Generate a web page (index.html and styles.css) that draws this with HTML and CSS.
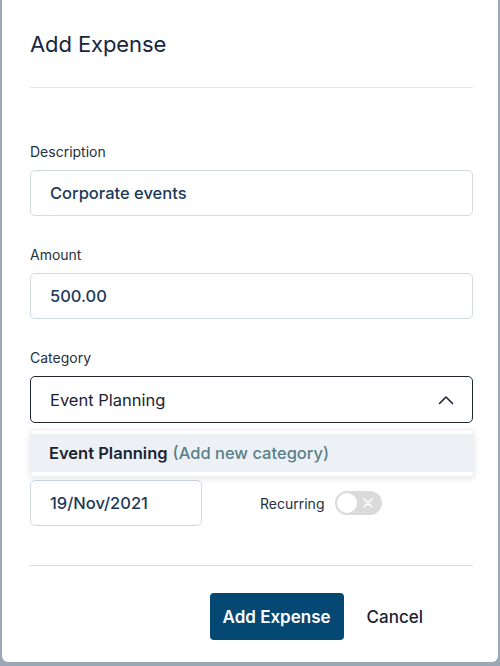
FILE: index.html
```html
<!DOCTYPE html>
<html lang="en">
<head>
    <meta charset="UTF-8">
    <meta name="viewport" content="width=device-width, initial-scale=1.0">
    <title>Add Expense</title>
    <link rel="stylesheet" href="styles.css">
</head>
<body>

    <div class="modal">
        <!-- Header -->
        <div class="modal-header">
            <h1>Add Expense</h1>
        </div>

        <!-- Form -->
        <div class="modal-body">
            <div class="field">
                <label class="label">Description</label>
                <div class="input">Corporate events</div>
            </div>

            <div class="field">
                <label class="label">Amount</label>
                <div class="input">500.00</div>
            </div>

            <div class="field category">
                <label class="label">Category</label>
                <div class="select">
                    <span>Event Planning</span>
                    <svg class="chevron" width="16" height="10" viewBox="0 0 16 10">
                        <path d="M1.5 8.5 L8 2 L14.5 8.5" fill="none" stroke="#1c2535" stroke-width="1.6" stroke-linecap="round" stroke-linejoin="round"/>
                    </svg>
                </div>
                <div class="dropdown">
                    <div class="option"><b>Event Planning</b> <span class="hint">(Add new category)</span></div>
                </div>
            </div>

            <div class="field">
                <label class="label hidden">Date</label>
                <div class="date-row">
                    <div class="input date">19/Nov/2021</div>
                    <span class="toggle-label">Recurring</span>
                    <div class="toggle">
                        <span class="knob"></span>
                        <svg class="cross" width="10" height="10" viewBox="0 0 10 10">
                            <path d="M1 1 L9 9 M9 1 L1 9" stroke="#fff" stroke-width="1.6" stroke-linecap="round"/>
                        </svg>
                    </div>
                </div>
            </div>
        </div>

        <!-- Footer -->
        <div class="modal-footer">
            <button class="button primary">Add Expense</button>
            <button class="button link">Cancel</button>
        </div>
    </div>

</body>
</html>
```

FILE: styles.css
```css
body {
    font-family: Inter, "Noto Sans", sans-serif;
    background-color: #9ba8b7;
    margin: 0;
    padding: 0 2px 4px 2px;
}
.modal {
    background-color: #fff;
    border-radius: 0 0 6px 6px;
    height: 662px;
    padding: 0 25px 0 28px;
    box-sizing: border-box;
}
.modal-header {
    padding-top: 30px;
    border-bottom: 1px solid #e4e8ee;
    padding-bottom: 29px;
}
.modal-header h1 {
    margin: 0;
    font-size: 22px;
    line-height: 28px;
    font-weight: 400;
    color: #17253d;
    letter-spacing: -0.1px;
}
.modal-body {
    padding-top: 55px;
    padding-bottom: 39px;
    border-bottom: 1px solid #d7dde4;
}
.field {
    margin-bottom: 30px;
}
.field:last-child {
    margin-bottom: 0;
}
.label {
    display: block;
    font-size: 14px;
    line-height: 18px;
    color: #27303d;
    margin-bottom: 9px;
}
.hidden {
    visibility: hidden;
}
.input {
    height: 46px;
    box-sizing: border-box;
    border: 1px solid #d3dae2;
    border-radius: 5px;
    padding: 0 19px;
    display: flex;
    align-items: center;
    font-size: 16.5px;
    font-weight: 500;
    color: #1b3a5a;
}
.category {
    position: relative;
}
.select {
    height: 47px;
    box-sizing: border-box;
    border: 1px solid #1e2838;
    border-radius: 5px;
    padding: 0 18px 0 19px;
    display: flex;
    align-items: center;
    justify-content: space-between;
    font-size: 16.5px;
    color: #1a2333;
}
.dropdown {
    position: absolute;
    top: calc(100% + 6px);
    left: 0;
    right: -1px;
    background-color: #fff;
    border: 1px solid #eceff3;
    border-radius: 4px;
    box-shadow: 0 2px 6px rgba(30, 40, 60, 0.12);
    padding: 4px 0;
    z-index: 2;
}
.option {
    height: 38px;
    background-color: #edf1f5;
    display: flex;
    align-items: center;
    padding-left: 18px;
    font-size: 16.5px;
    color: #1a2333;
}
.option b {
    font-weight: 600;
    margin-right: 5px;
}
.hint {
    color: #5b7f88;
    font-weight: 500;
}
.date-row {
    display: flex;
    align-items: center;
}
.date {
    width: 172px;
}
.toggle-label {
    margin-left: 58px;
    font-size: 14px;
    color: #27303d;
}
.toggle {
    position: relative;
    width: 47px;
    height: 24px;
    margin-left: 11px;
    border-radius: 12px;
    background-color: #dadada;
}
.knob {
    position: absolute;
    left: 2px;
    top: 2px;
    width: 20px;
    height: 20px;
    border-radius: 50%;
    background-color: #fff;
}
.cross {
    position: absolute;
    right: 9px;
    top: 7px;
}
.modal-footer {
    display: flex;
    justify-content: flex-end;
    align-items: center;
    padding-top: 27px;
    padding-right: 50px;
}
.button {
    font-family: inherit;
    font-size: 17px;
    border: none;
    cursor: pointer;
}
.primary {
    height: 47px;
    padding: 0 13px;
    background-color: #044873;
    color: #fff;
    font-weight: 600;
    border-radius: 4px;
}
.link {
    background: none;
    color: #1a2333;
    font-weight: 500;
    margin-left: 23px;
    padding: 0;
}
```
